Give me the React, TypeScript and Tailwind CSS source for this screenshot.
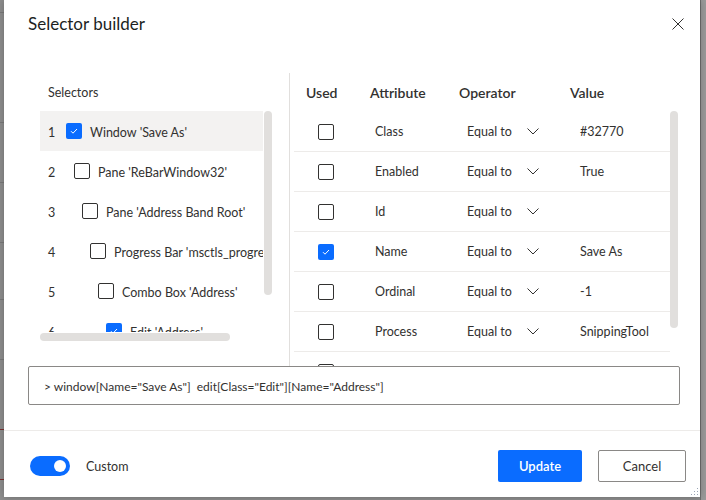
import React from 'react';

const FONT = '"Segoe UI", Lato, "Liberation Sans", sans-serif';

const selectors = [
  { n: 1, label: "Window 'Save As'", checked: true, indent: 'w-0', active: true },
  { n: 2, label: "Pane 'ReBarWindow32'", checked: false, indent: 'w-[8px]', active: false },
  { n: 3, label: "Pane 'Address Band Root'", checked: false, indent: 'w-[16px]', active: false },
  { n: 4, label: "Progress Bar 'msctls_progress32'", checked: false, indent: 'w-[24px]', active: false },
  { n: 5, label: "Combo Box 'Address'", checked: false, indent: 'w-[32px]', active: false },
  { n: 6, label: "Edit 'Address'", checked: true, indent: 'w-[40px]', active: false },
];

const attributes = [
  { name: 'Class', used: false, value: '#32770' },
  { name: 'Enabled', used: false, value: 'True' },
  { name: 'Id', used: false, value: '' },
  { name: 'Name', used: true, value: 'Save As' },
  { name: 'Ordinal', used: false, value: '-1' },
  { name: 'Process', used: false, value: 'SnippingTool' },
];

function Checkbox({ checked }: { checked: boolean }) {
  if (checked) {
    return (
      <span className="flex h-[16px] w-[16px] shrink-0 items-center justify-center rounded-[2px] bg-[#0a6cff]">
        <svg width="10" height="10" viewBox="0 0 10 10" fill="none">
          <path d="M2 5.2 L4 7.2 L8 3" stroke="white" strokeWidth="1" />
        </svg>
      </span>
    );
  }
  return <span className="block h-[16px] w-[16px] shrink-0 rounded-[2px] border border-[#323130] bg-white" />;
}

function Chevron() {
  return (
    <svg width="12" height="7" viewBox="0 0 12 7" fill="none">
      <path d="M0.5 0.5 L6 6 L11.5 0.5" stroke="#323130" strokeWidth="1" />
    </svg>
  );
}

export default function App() {
  return (
    <div className="flex h-[500px] w-[706px] overflow-hidden bg-[#8e8e8e]" style={{ fontFamily: FONT }}>
      {/* dimmed window behind the dialog */}
      <div className="flex w-[4px] shrink-0 flex-col">
        <div className="h-[13px] border-b border-[#7a7a7a]" />
        <div className="h-[110px] border-b border-[#7a7a7a]" />
        <div className="h-[60px] border-b border-[#7a7a7a]" />
        <div className="h-[60px] border-b border-[#7a7a7a]" />
        <div className="h-[57px] border-b border-[#7a7a7a]" />
        <div className="h-[60px] border-b border-[#7a7a7a]" />
        <div className="h-[70px] border-b border-[#7c3030]" />
        <div className="h-[50px] border-b border-[#7c3030]" />
      </div>

      <div className="relative flex h-[497px] w-[696px] shrink-0 flex-col bg-white text-[#323130] shadow-[0_0_8px_rgba(0,0,0,0.25)]">
        {/* Header */}
        <div className="flex h-[73px] items-start justify-between pl-[24px] pr-[15px] pt-[12px]">
          <h1 className="text-[17px] leading-[24px] text-[#201f1e]">Selector builder</h1>
          <button className="mt-[5px] flex h-[14px] w-[14px] items-center justify-center">
            <svg width="12" height="12" viewBox="0 0 12 12" fill="none">
              <path d="M0.5 0.5 L11.5 11.5 M11.5 0.5 L0.5 11.5" stroke="#323130" strokeWidth="1" />
            </svg>
          </button>
        </div>

        {/* Body */}
        <div className="flex h-[293px]">
          {/* Selectors list */}
          <div className="flex w-[285px] flex-col pl-[36px]">
            <div className="flex h-[38px] items-center pl-[8px] pt-[2px] text-[12.5px]">Selectors</div>
            <div className="flex">
              <div className="h-[221px] w-[223px] overflow-hidden">
                {selectors.map((s) => (
                  <div
                    key={s.n}
                    className={`flex h-[40px] items-center whitespace-nowrap pl-[8px] text-[12.5px] ${s.active ? 'bg-[#f3f2f1]' : ''}`}
                  >
                    <span className="w-[18px] shrink-0 pt-[4px]">{s.n}</span>
                    <span className={`${s.indent} shrink-0`} />
                    <Checkbox checked={s.checked} />
                    <span className="ml-[8px] pt-[4px]">{s.label}</span>
                  </div>
                ))}
              </div>
              <div className="ml-[1px] h-[184px] w-[8px] rounded-full bg-[#e1dfdd]" />
            </div>
            <div className="mt-[1px] h-[8px] w-[190px] rounded-full bg-[#e1dfdd]" />
          </div>

          <div className="h-full w-px bg-[#e1dfdd]" />

          {/* Attributes table */}
          <div className="flex flex-1 flex-col pl-[4px]">
            <div className="grid h-[39px] grid-cols-[76px_89px_111px_1fr] items-center pb-[1px] text-[14px] font-semibold">
              <span className="pl-[12px]">Used</span>
              <span>Attribute</span>
              <span>Operator</span>
              <span>Value</span>
            </div>
            <div className="-mt-px flex">
              <div className="h-[255px] w-[376px] overflow-hidden pt-px">
                {attributes.map((a) => (
                  <div
                    key={a.name}
                    className="grid h-[40px] grid-cols-[81px_92px_113px_1fr] items-center border-b border-[#edebe9] text-[12.5px]"
                  >
                    <span className="flex pl-[24px]">
                      <Checkbox checked={a.used} />
                    </span>
                    <span className="pt-[2px]">{a.name}</span>
                    <span className="flex items-center">
                      <span className="w-[60px] pt-[2px]">Equal to</span>
                      <Chevron />
                    </span>
                    <span className="pt-[2px]">{a.value}</span>
                  </div>
                ))}
                <div className="flex h-[40px] items-center pl-[24px]">
                  <Checkbox checked={false} />
                </div>
              </div>
              <div className="h-[217px] w-[8px] rounded-full bg-[#e1dfdd]" />
            </div>
          </div>
        </div>

        {/* Selector preview */}
        <div className="ml-[24px] mr-[20px] flex h-[39px] items-center whitespace-pre rounded-[2px] border border-[#8a8886] bg-white pl-[15px] pt-[3px] text-[12px]">
          {'> window[Name="Save As"]  edit[Class="Edit"][Name="Address"]'}
        </div>

        {/* Footer */}
        <div className="mt-[25px] flex flex-1 items-center justify-between border-t border-[#edebe9] pl-[26px] pr-[14px] pt-[4px]">
          <div className="flex items-center">
            <span className="flex h-[20px] w-[40px] items-center justify-end rounded-full bg-[#0a6cff] pr-[4px]">
              <span className="h-[12px] w-[12px] rounded-full bg-white" />
            </span>
            <span className="ml-[16px] pt-[3px] text-[12.5px]">Custom</span>
          </div>
          <div className="flex gap-[16px]">
            <button className="h-[32px] w-[84px] rounded-[2px] bg-[#0a6cff] pt-[2px] text-[13px] font-semibold text-white">
              Update
            </button>
            <button className="h-[32px] w-[88px] rounded-[2px] border border-[#8a8886] bg-white pt-[2px] text-[13px] text-[#323130]">
              Cancel
            </button>
          </div>
        </div>

        {/* resize grip */}
        <svg className="absolute bottom-[1px] right-[1px]" width="10" height="10" viewBox="0 0 10 10">
          {[
            [8, 2], [8, 5], [5, 5], [8, 8], [5, 8], [2, 8],
          ].map(([x, y]) => (
            <rect key={`${x}-${y}`} x={x} y={y} width="1" height="1" fill="#9aa4b4" />
          ))}
        </svg>
      </div>

      <div className="flex-1 border-l border-[#6f6f6f] bg-[#9a9a9a]" />
    </div>
  );
}
